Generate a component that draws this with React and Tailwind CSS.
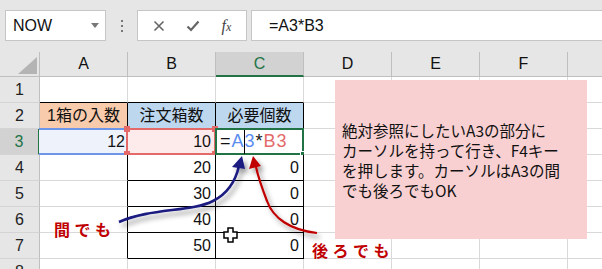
import React from "react";

const font = { fontFamily: '"Liberation Sans", "Noto Sans CJK JP", sans-serif' };
const cols = ["A", "B", "C", "D", "E", "F", "G"];

// 表の中身（行番号 -> 列 -> 値）。3行目は選択表示の方で描く
const data = {
  2: { A: "1箱の入数", B: "注文箱数", C: "必要個数" },
  4: { B: "20", C: "0" },
  5: { B: "30", C: "0" },
  6: { B: "40", C: "0" },
  7: { B: "50", C: "0" },
};

const cellClass = (r, c) => {
  let right = "border-r-[#d9d9d9]";
  let bottom = "border-b-[#d9d9d9]";
  let bg = "bg-white";
  if (r === 1 && ["A", "B", "C"].includes(c)) bottom = "border-b-black";
  if (r === 2 && ["A", "B", "C"].includes(c)) {
    right = "border-r-black";
    bottom = "border-b-black";
    bg = c === "A" ? "bg-[#f8cbad]" : "bg-[#bdd7ee]";
  }
  if (r >= 3 && r <= 7) {
    if (c === "A") right = "border-r-black";
    if (c === "B" || c === "C") {
      right = "border-r-black";
      bottom = "border-b-black";
    }
  }
  return `relative border-r border-b ${right} ${bottom} ${bg}`;
};

const Arrows = () => (
  <svg className="absolute left-0 top-0 pointer-events-none" width="602" height="269">
    <defs>
      <filter id="sh" x="-20%" y="-20%" width="140%" height="140%">
        <feDropShadow dx="3" dy="4" stdDeviation="2.6" floodColor="#000" floodOpacity="0.4" />
      </filter>
    </defs>
    <g filter="url(#sh)">
      <path d="M119 222 C 150 208, 192 212, 213 201 C 229 193, 236 179, 239 166" fill="none" stroke="#1a1a80" strokeWidth="2.6" />
      <polygon points="242,156 232,167 245,169" fill="#1a1a80" />
      <path d="M317 233 C 290 230, 273 218, 267 201 C 262 188, 258 176, 256 167" fill="none" stroke="#c00000" strokeWidth="2.2" />
      <polygon points="253,156 249,169 261,166" fill="#c00000" />
    </g>
    {/* マウスカーソル */}
    <path d="M228 228 h5 v4 h4 v6 h-4 v4 h-5 v-4 h-4 v-6 h4 z" fill="#fff" stroke="#000" strokeWidth="1.5" />
  </svg>
);

const Cell = ({ r, c }) => {
  const v = data[r] && data[r][c];
  const isHead = r === 2;
  return (
    <div className={cellClass(r, c)}>
      {v && (
        <div
          className={`h-full flex items-center text-[16px] text-[#111] ${
            isHead ? "justify-center" : "justify-end pr-[4px]"
          }`}
        >
          {v}
        </div>
      )}
      {r === 3 && c === "A" && (
        <div className="absolute -left-px -top-px -right-px -bottom-px border-y-2 border-[#6d96e8] bg-[#eef3fb] flex items-center justify-end pr-[3px] text-[16px] text-[#111]">
          12
        </div>
      )}
      {r === 3 && c === "B" && (
        <div className="absolute -left-[2px] -top-px -right-px -bottom-px border-2 border-[#e46a6a] bg-[#fdeaea] flex items-center justify-end pr-[3px] text-[16px] text-[#111]">
          10
          <span className="absolute -left-[4px] -top-[4px] w-[6px] h-[6px] bg-[#e46a6a]" />
          <span className="absolute -right-[4px] -top-[4px] w-[6px] h-[6px] bg-[#e46a6a]" />
          <span className="absolute -left-[4px] -bottom-[4px] w-[6px] h-[6px] bg-[#e46a6a]" />
          <span className="absolute -right-[4px] -bottom-[4px] w-[6px] h-[6px] bg-[#e46a6a]" />
        </div>
      )}
      {r === 3 && c === "C" && (
        <div className="absolute -left-px -top-px -right-px -bottom-px border-2 border-[#217346] bg-white flex items-center pl-[3px] text-[18px] tracking-[1px] text-[#111]">
          <span>=</span>
          <span className="text-[#5b8def]">A</span>
          <span className="inline-block w-px h-[24px] bg-black -ml-[1px]" />
          <span className="text-[#5b8def]">3</span>
          <span>*</span>
          <span className="text-[#e46a6a]">B3</span>
          <span className="absolute -right-[4px] -bottom-[4px] w-[6px] h-[6px] bg-[#217346] border border-white" />
        </div>
      )}
    </div>
  );
};

export default function App() {
  return (
    <div className="relative w-[602px] h-[269px] overflow-hidden bg-white" style={font}>
      {/* 数式バー */}
      <div className="h-[52px] bg-[#e6e6e6] flex items-start pt-[10px]">
        <div className="ml-[5px] w-[101px] h-[31px] bg-white border border-[#c6c6c6] flex items-center pl-[7px] pr-[6px] justify-between text-[16px] text-[#111]">
          <span>NOW</span>
          <span className="w-0 h-0 border-x-[4px] border-x-transparent border-t-[5px] border-t-[#777]" />
        </div>
        <div className="w-[31px] h-[31px] flex flex-col items-center justify-center gap-[3px]">
          <span className="w-[2px] h-[2px] bg-[#777]" />
          <span className="w-[2px] h-[2px] bg-[#777]" />
          <span className="w-[2px] h-[2px] bg-[#777]" />
        </div>
        <div className="w-[110px] h-[31px] bg-white border border-[#c6c6c6] flex items-center justify-around px-[4px] text-[#666]">
          <svg width="12" height="12" viewBox="0 0 12 12">
            <path d="M1.5 1.5 L10.5 10.5 M10.5 1.5 L1.5 10.5" stroke="#666" strokeWidth="1.6" />
          </svg>
          <svg width="14" height="12" viewBox="0 0 14 12">
            <path d="M1.5 6.5 L5 10 L12.5 1.5" stroke="#666" strokeWidth="2.2" fill="none" />
          </svg>
          <span className="italic text-[16px] text-[#444]" style={{ fontFamily: '"Liberation Serif", serif' }}>
            f<span className="text-[12px]">x</span>
          </span>
        </div>
        <div className="ml-[4px] flex-1 h-[31px] bg-white border-y border-l border-[#c6c6c6] flex items-center pl-[17px] text-[16px] text-[#111]">
          =A3*B3
        </div>
      </div>

      {/* シート */}
      <div className="grid grid-cols-[40px_88px_88px_88px_88px_88px_88px_88px] grid-rows-[25px_26px_26px_26px_26px_26px_26px_26px_26px]">
        <div className="bg-[#e6e6e6] border-r border-b border-[#bfbfbf] relative">
          <svg className="absolute left-0 top-0" width="40" height="25">
            <polygon points="18,22 37,22 37,5" fill="#b4b4b4" />
          </svg>
        </div>
        {cols.map((c) => (
          <div
            key={c}
            className={`flex items-center justify-center text-[16px] border-r border-[#bfbfbf] ${
              c === "C"
                ? "bg-[#d2d2d2] text-[#217346] border-b-2 border-b-[#217346]"
                : "bg-[#e6e6e6] text-[#111] border-b border-b-[#bfbfbf]"
            }`}
          >
            {c === "G" ? "" : c}
          </div>
        ))}
        {[1, 2, 3, 4, 5, 6, 7, 8].map((r) => (
          <React.Fragment key={r}>
            <div
              className={`flex items-center justify-center text-[16px] border-b border-b-[#d4d4d4] ${
                r === 3
                  ? "bg-[#d2d2d2] text-[#217346] border-r-2 border-r-[#217346]"
                  : "bg-[#e6e6e6] text-[#222] border-r border-r-[#bfbfbf]"
              }`}
            >
              {r}
            </div>
            {cols.map((c) => (
              <Cell key={c} r={r} c={c} />
            ))}
          </React.Fragment>
        ))}
      </div>

      {/* 吹き出し（図形） */}
      <div className="absolute left-[335px] top-[80px] w-[252px] h-[159px] bg-[#f8d0d2] flex items-center pl-[7px] text-[15.5px] leading-[20px] text-[#111] whitespace-nowrap">
        <div style={{ fontFamily: '"Noto Sans CJK JP", sans-serif' }}>
          絶対参照にしたいA3の部分に
          <br />
          カーソルを持って行き、F4キー
          <br />
          を押します。カーソルはA3の間
          <br />
          でも後ろでもOK
        </div>
      </div>

      <Arrows />

      <div className="absolute left-[54px] top-[217px] text-[16px] tracking-[4.5px] font-bold text-[#c00000]" style={{ fontFamily: '"Noto Sans CJK JP", sans-serif' }}>
        間でも
      </div>
      <div className="absolute left-[312px] top-[238px] text-[16px] tracking-[4.5px] font-bold text-[#c00000]" style={{ fontFamily: '"Noto Sans CJK JP", sans-serif' }}>
        後ろでも
      </div>
    </div>
  );
}
